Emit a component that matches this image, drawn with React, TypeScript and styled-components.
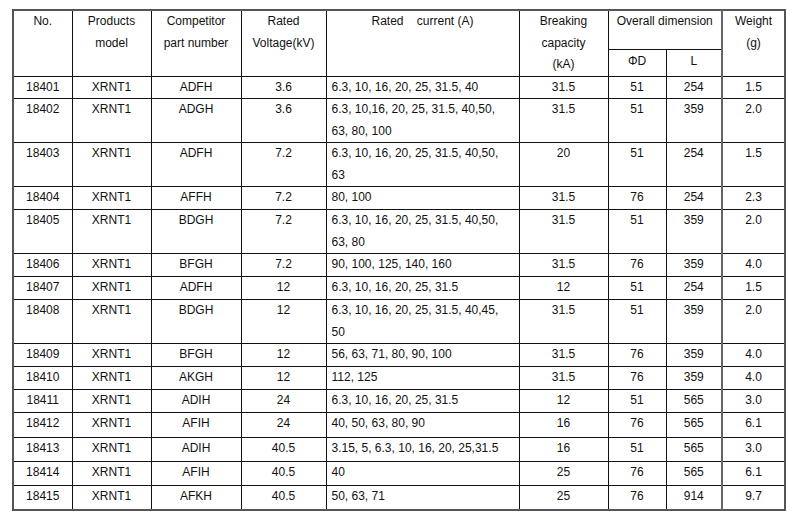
import React from "react";
import styled, { createGlobalStyle } from "styled-components";

const Global = createGlobalStyle`
  html, body { margin: 0; padding: 0; background: #fff; }
  body { font-family: "Liberation Sans", Arial, sans-serif; color: #000; }
`;

const Page = styled.div`
  width: 800px;
  height: 516px;
  padding: 9px 0 0 12px;
  box-sizing: border-box;
  background: #fff;
`;

const Table = styled.table`
  border-collapse: collapse;
  table-layout: fixed;
  border: 2px solid #555;
  font-size: 12px;
  line-height: 21.5px;
  color: #111;
`;

const Row = styled.tr<{ $h: number }>`
  height: ${(p) => p.$h}px;
`;

const Cell = styled.td<{ $left?: boolean; $thick?: boolean }>`
  border: 1px solid #111;
  ${(p) => (p.$thick ? "border-left: 2px solid #666;" : "")}
  padding: 0 ${(p) => (p.$left ? "0 0 5px" : "0")};
  text-align: ${(p) => (p.$left ? "left" : "center")};
  vertical-align: top;
  white-space: pre;
  overflow: hidden;
`;

const Head = styled.th<{ $thick?: boolean; $pt?: number }>`
  border: 1px solid #111;
  ${(p) => (p.$thick ? "border-left: 2px solid #666;" : "")}
  padding: ${(p) => p.$pt ?? 0}px 0 0 0;
  font-weight: normal;
  text-align: center;
  vertical-align: top;
  white-space: pre;
`;

type R = {
  no: string;
  v: string;
  part: string;
  kv: string;
  cur: string[];
  bk: string;
  d: string;
  l: string;
  w: string;
  h: number;
};

const rows: R[] = [
  { no: "18401", v: "XRNT1", part: "ADFH", kv: "3.6", cur: ["6.3, 10, 16, 20, 25, 31.5, 40"], bk: "31.5", d: "51", l: "254", w: "1.5", h: 21 },
  { no: "18402", v: "XRNT1", part: "ADGH", kv: "3.6", cur: ["6.3, 10,16, 20, 25, 31.5, 40,50,", "63, 80, 100"], bk: "31.5", d: "51", l: "359", w: "2.0", h: 44 },
  { no: "18403", v: "XRNT1", part: "ADFH", kv: "7.2", cur: ["6.3, 10, 16, 20, 25, 31.5, 40,50,", "63"], bk: "20", d: "51", l: "254", w: "1.5", h: 43 },
  { no: "18404", v: "XRNT1", part: "AFFH", kv: "7.2", cur: ["80, 100"], bk: "31.5", d: "76", l: "254", w: "2.3", h: 23 },
  { no: "18405", v: "XRNT1", part: "BDGH", kv: "7.2", cur: ["6.3, 10, 16, 20, 25, 31.5, 40,50,", "63, 80"], bk: "31.5", d: "51", l: "359", w: "2.0", h: 43 },
  { no: "18406", v: "XRNT1", part: "BFGH", kv: "7.2", cur: ["90, 100, 125, 140, 160"], bk: "31.5", d: "76", l: "359", w: "4.0", h: 23 },
  { no: "18407", v: "XRNT1", part: "ADFH", kv: "12", cur: ["6.3, 10, 16, 20, 25, 31.5"], bk: "12", d: "51", l: "254", w: "1.5", h: 23 },
  { no: "18408", v: "XRNT1", part: "BDGH", kv: "12", cur: ["6.3, 10, 16, 20, 25, 31.5, 40,45,", "50"], bk: "31.5", d: "51", l: "359", w: "2.0", h: 43 },
  { no: "18409", v: "XRNT1", part: "BFGH", kv: "12", cur: ["56, 63, 71, 80, 90, 100"], bk: "31.5", d: "76", l: "359", w: "4.0", h: 23 },
  { no: "18410", v: "XRNT1", part: "AKGH", kv: "12", cur: ["112, 125"], bk: "31.5", d: "76", l: "359", w: "4.0", h: 21 },
  { no: "18411", v: "XRNT1", part: "ADIH", kv: "24", cur: ["6.3, 10, 16, 20, 25, 31.5"], bk: "12", d: "51", l: "565", w: "3.0", h: 23 },
  { no: "18412", v: "XRNT1", part: "AFIH", kv: "24", cur: ["40, 50, 63, 80, 90"], bk: "16", d: "76", l: "565", w: "6.1", h: 25 },
  { no: "18413", v: "XRNT1", part: "ADIH", kv: "40.5", cur: ["3.15, 5, 6.3, 10, 16, 20, 25,31.5"], bk: "16", d: "51", l: "565", w: "3.0", h: 24 },
  { no: "18414", v: "XRNT1", part: "AFIH", kv: "40.5", cur: ["40"], bk: "25", d: "76", l: "565", w: "6.1", h: 24 },
  { no: "18415", v: "XRNT1", part: "AFKH", kv: "40.5", cur: ["50, 63, 71"], bk: "25", d: "76", l: "914", w: "9.7", h: 25 },
];

const widths = [59, 79, 90, 85, 193, 89, 58, 56, 63];

export default function App() {
  return (
    <Page>
      <Global />
      <Table style={{ width: widths.reduce((a, b) => a + b, 0) }}>
        <colgroup>
          {widths.map((w, i) => (
            <col key={i} style={{ width: w }} />
          ))}
        </colgroup>
        <thead>
          <Row $h={39}>
            <Head rowSpan={2}>No.</Head>
            <Head rowSpan={2}>{"Products\nmodel"}</Head>
            <Head rowSpan={2}>{"Competitor\npart number"}</Head>
            <Head rowSpan={2}>{"Rated\nVoltage(kV)"}</Head>
            <Head rowSpan={2}>{"Rated    current (A)"}</Head>
            <Head rowSpan={2}>{"Breaking\ncapacity\n(kA)"}</Head>
            <Head colSpan={2}>Overall dimension</Head>
            <Head rowSpan={2} $thick>{"Weight\n(g)"}</Head>
          </Row>
          <Row $h={26}>
            <Head $pt={1}>ΦD</Head>
            <Head $pt={1}>L</Head>
          </Row>
        </thead>
        <tbody>
          {rows.map((r) => (
            <Row key={r.no} $h={r.h}>
              <Cell>{r.no}</Cell>
              <Cell>{r.v}</Cell>
              <Cell>{r.part}</Cell>
              <Cell>{r.kv}</Cell>
              <Cell $left>{r.cur.join("\n")}</Cell>
              <Cell>{r.bk}</Cell>
              <Cell>{r.d}</Cell>
              <Cell>{r.l}</Cell>
              <Cell $thick>{r.w}</Cell>
            </Row>
          ))}
        </tbody>
      </Table>
    </Page>
  );
}
